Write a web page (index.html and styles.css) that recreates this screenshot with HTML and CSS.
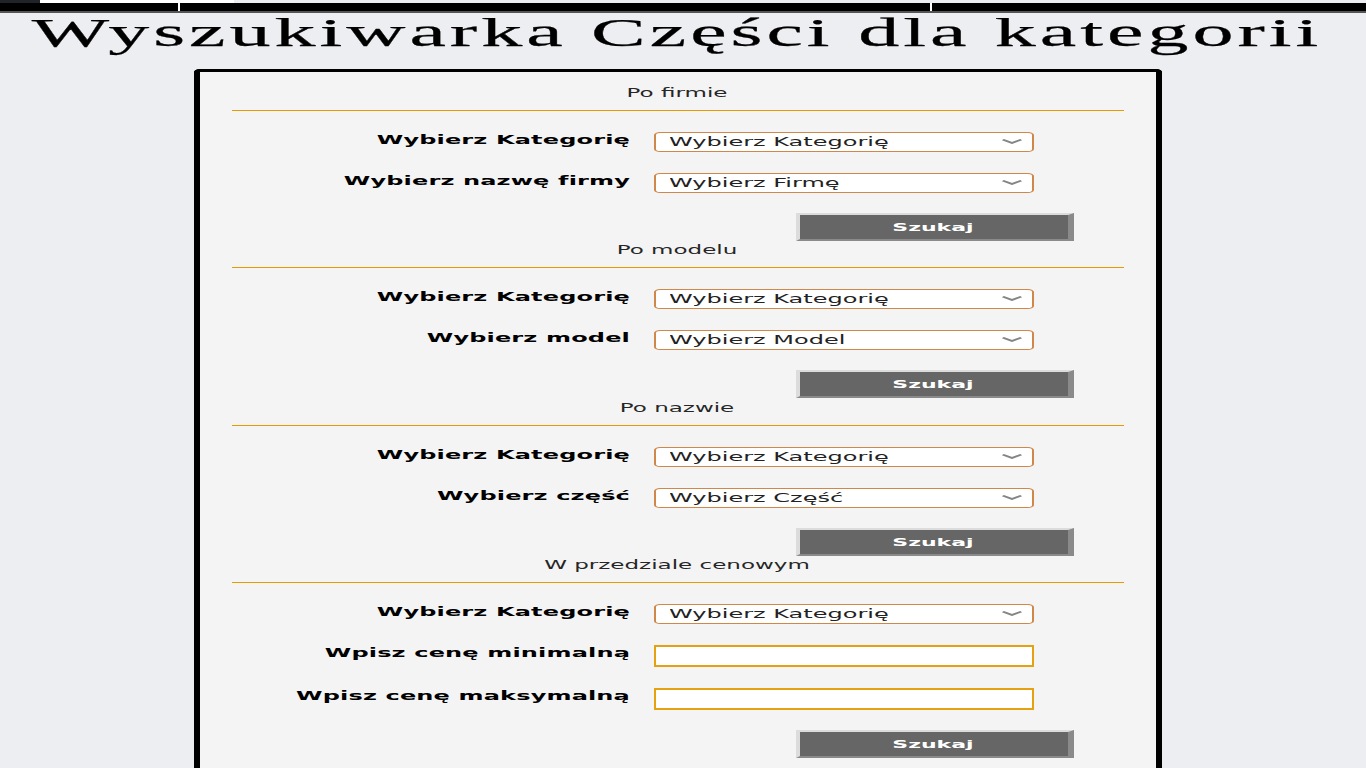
FILE: index.html
```html
<!DOCTYPE html>
<html lang="pl">
<head>
<meta charset="utf-8">
<title>Wyszukiwarka Części dla kategorii</title>
<link rel="stylesheet" href="styles.css">
</head>
<body>
<div class="page">
  <div class="topbar">
    <div class="tabs"><span class="tab tab-dark"></span><span class="tab tab-light"></span></div>
    <nav class="navbar"><span class="nav-item nav-a"></span><span class="nav-item nav-b"></span><span class="nav-item nav-c"></span></nav>
    <div class="navline"></div>
  </div>
  <main class="main">
    <h1 class="title">Wyszukiwarka Części dla kategorii</h1>
    <div class="panel">
      <form class="search">
        <div class="search-title">Po firmie</div>
        <div class="rule"></div>
        <div class="row"><label class="label">Wybierz Kategorię</label><div class="select-wrap"><select class="select"><option>Wybierz Kategorię</option></select><svg class="chev" viewBox="0 0 12 6"><polyline points="0.5,0.8 6,4.8 11.5,0.8"/></svg></div></div>
        <div class="row"><label class="label">Wybierz nazwę firmy</label><div class="select-wrap"><select class="select"><option>Wybierz Firmę</option></select><svg class="chev" viewBox="0 0 12 6"><polyline points="0.5,0.8 6,4.8 11.5,0.8"/></svg></div></div>
        <div class="actions"><button type="button" class="btn">Szukaj</button></div>
      </form>
      <form class="search search--wide">
        <div class="search-title">Po modelu</div>
        <div class="rule"></div>
        <div class="row"><label class="label">Wybierz Kategorię</label><div class="select-wrap"><select class="select"><option>Wybierz Kategorię</option></select><svg class="chev" viewBox="0 0 12 6"><polyline points="0.5,0.8 6,4.8 11.5,0.8"/></svg></div></div>
        <div class="row"><label class="label">Wybierz model</label><div class="select-wrap"><select class="select"><option>Wybierz Model</option></select><svg class="chev" viewBox="0 0 12 6"><polyline points="0.5,0.8 6,4.8 11.5,0.8"/></svg></div></div>
        <div class="actions"><button type="button" class="btn">Szukaj</button></div>
      </form>
      <form class="search">
        <div class="search-title">Po nazwie</div>
        <div class="rule"></div>
        <div class="row"><label class="label">Wybierz Kategorię</label><div class="select-wrap"><select class="select"><option>Wybierz Kategorię</option></select><svg class="chev" viewBox="0 0 12 6"><polyline points="0.5,0.8 6,4.8 11.5,0.8"/></svg></div></div>
        <div class="row"><label class="label">Wybierz część</label><div class="select-wrap"><select class="select"><option>Wybierz Część</option></select><svg class="chev" viewBox="0 0 12 6"><polyline points="0.5,0.8 6,4.8 11.5,0.8"/></svg></div></div>
        <div class="actions"><button type="button" class="btn">Szukaj</button></div>
      </form>
      <form class="search">
        <div class="search-title">W przedziale cenowym</div>
        <div class="rule"></div>
        <div class="row"><label class="label">Wybierz Kategorię</label><div class="select-wrap"><select class="select"><option>Wybierz Kategorię</option></select><svg class="chev" viewBox="0 0 12 6"><polyline points="0.5,0.8 6,4.8 11.5,0.8"/></svg></div></div>
        <div class="row"><label class="label">Wpisz cenę minimalną</label><input class="input" type="text"></div>
        <div class="row"><label class="label">Wpisz cenę maksymalną</label><input class="input" type="text"></div>
        <div class="actions"><button type="button" class="btn">Szukaj</button></div>
      </form>
    </div>
  </main>
</div>
</body>
</html>
```
FILE: styles.css
```css
html {
  background: #edeef2;
  overflow: hidden;
}
body {
  margin: 0;
  font-family: "DejaVu Sans", Verdana, sans-serif;
}
.page {
  width: 683px;
  transform: scaleX(2);
  transform-origin: 0 0;
}
.topbar {
  width: 683px;
}
.tabs {
  display: flex;
  height: 3px;
}
.tab-dark {
  width: 19.5px;
  background: #202428;
}
.tab-light {
  width: 97px;
  background: #ffffff;
}
.navbar {
  display: flex;
  height: 8px;
  background: #000;
}
.nav-item {
  display: block;
}
.nav-a {
  width: 88.5px;
  border-right: 1px solid #fff;
}
.nav-b {
  width: 375px;
  border-right: 1px solid #fff;
}
.nav-c {
  flex: 1;
}
.navline {
  height: 2px;
  background: #555;
}
.main {
  width: 677px;
}
.title {
  margin: 0;
  font-family: "Liberation Serif", "Times New Roman", serif;
  font-weight: normal;
  font-size: 41px;
  line-height: 39px;
  letter-spacing: 2px;
  text-align: center;
  color: #000;
  -webkit-text-stroke: 0.25px #000;
}
.panel {
  width: 478px;
  margin: 17px auto 0;
  border: 3px solid #000;
  border-bottom: 0;
  border-radius: 3px 3px 0 0;
  background: #f4f4f4;
  padding: 14px 0 60px;
}
.search {
  margin: 0 0 2px;
}
.search--wide {
  margin-bottom: 3px;
}
.search-title {
  font-size: 11.5px;
  line-height: 14px;
  text-align: center;
  color: #262626;
}
.rule {
  margin: 10px 16px 0;
  height: 1px;
  background: #e69c00;
}
.row {
  display: flex;
  align-items: flex-start;
  margin-top: 21px;
}
.label {
  width: 215.5px;
  margin-right: 11.5px;
  font-size: 12px;
  font-weight: bold;
  line-height: 16px;
  letter-spacing: 0.08px;
  text-align: right;
  color: #000;
}
.select-wrap {
  position: relative;
  width: 190.5px;
  height: 20px;
}
.select {
  appearance: none;
  -webkit-appearance: none;
  display: block;
  width: 100%;
  height: 20px;
  margin: 0;
  padding: 0 0 0 7px;
  border: 1px solid #d0874a;
  border-radius: 3px;
  background: #fff;
  font-family: "DejaVu Sans", Verdana, sans-serif;
  font-size: 12px;
  color: #222;
}
.chev {
  position: absolute;
  right: 5px;
  top: 7px;
  width: 12px;
  height: 5px;
  fill: none;
  stroke: #858585;
  stroke-width: 2;
}
.input {
  box-sizing: border-box;
  width: 190.5px;
  height: 22px;
  margin: 0;
  border: 2px solid #e5a10f;
  border-left-width: 1.5px;
  border-right-width: 1.5px;
  background: #fff;
  padding: 0 4px;
}
.actions {
  margin-top: 20px;
  padding-left: 298px;
}
.btn {
  display: block;
  box-sizing: border-box;
  width: 139px;
  height: 28px;
  margin: 0;
  padding: 0;
  border-style: solid;
  border-width: 2px 3px 2px 2.5px;
  border-color: #dcdcdc #8a8a8a #8a8a8a #dcdcdc;
  background: #666;
  color: #fff;
  font-family: "DejaVu Sans", Verdana, sans-serif;
  font-size: 11px;
  font-weight: bold;
}
```
